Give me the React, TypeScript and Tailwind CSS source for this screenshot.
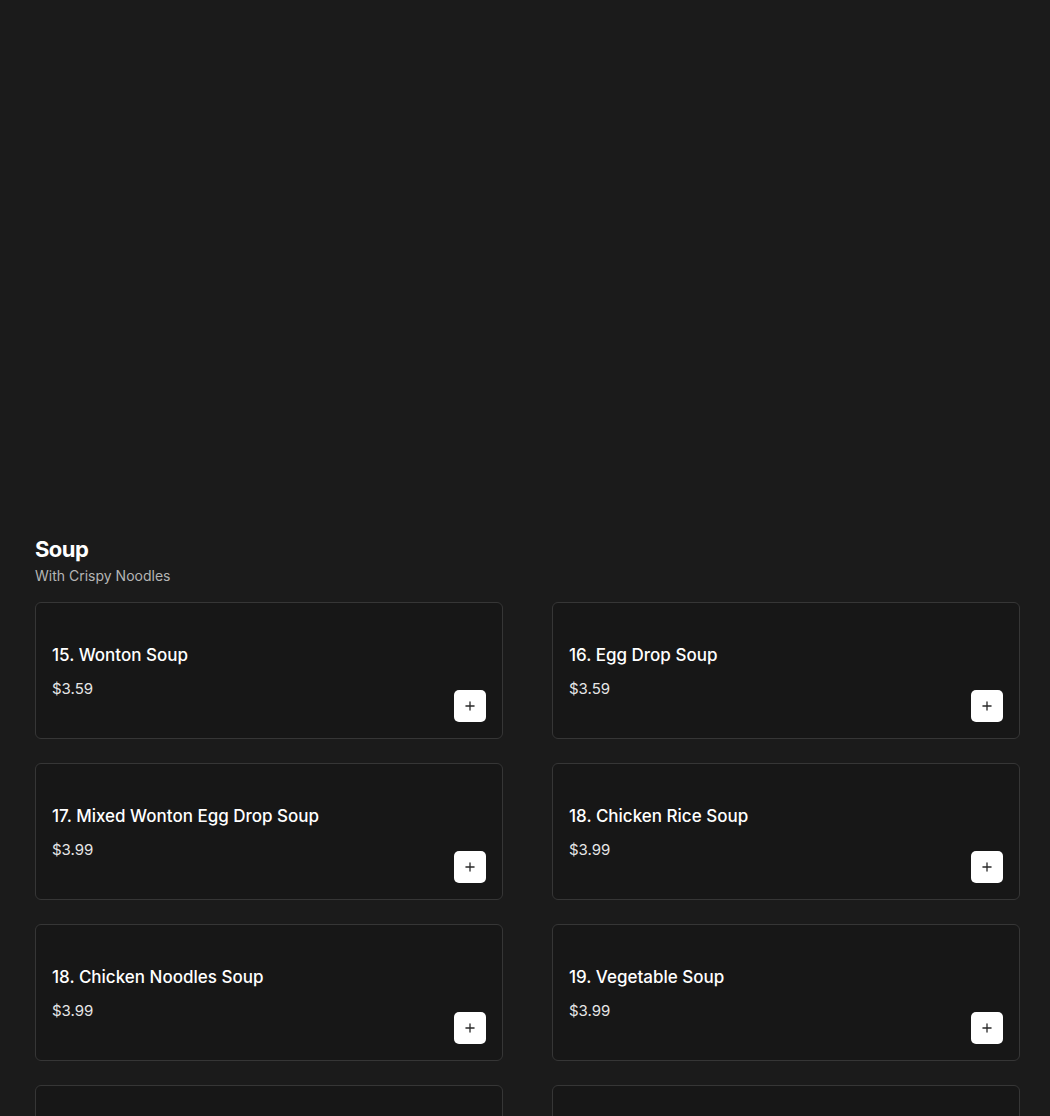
import React from 'react';
import { Plus } from 'lucide-react';

type MenuItem = { name: string; price: string };

const ITEMS: MenuItem[] = [
  { name: '15. Wonton Soup', price: '$3.59' },
  { name: '16. Egg Drop Soup', price: '$3.59' },
  { name: '17. Mixed Wonton Egg Drop Soup', price: '$3.99' },
  { name: '18. Chicken Rice Soup', price: '$3.99' },
  { name: '18. Chicken Noodles Soup', price: '$3.99' },
  { name: '19. Vegetable Soup', price: '$3.99' },
  { name: '20. House Special Soup', price: '$4.99' },
  { name: '21. Hot & Sour Soup', price: '$3.99' },
];

const ItemCard: React.FC<{ item: MenuItem }> = ({ item }) => (
  <div className="h-[137px] rounded-md border border-[#363636] bg-[#171717] px-4 pt-[42px] pb-4 flex flex-col">
    <p className="text-[17px] leading-5 font-medium text-white">{item.name}</p>
    <div className="flex items-end justify-between flex-1">
      <p className="text-[15px] leading-5 text-[#e6e6e6] self-start mt-[14px]">{item.price}</p>
      <button className="w-8 h-8 rounded-[5px] bg-white flex items-center justify-center text-[#2a2a2a]">
        <Plus size={14} strokeWidth={2.25} />
      </button>
    </div>
  </div>
);

const App: React.FC = () => {
  return (
    <div className="h-[1116px] overflow-hidden bg-[#1b1b1b] text-white" style={{ fontFamily: 'Inter, "Noto Sans", sans-serif' }}>
      <div className="h-[537px]" />
      <div className="pl-[35px]">
        <h2 className="text-[22px] leading-6 font-bold tracking-tight text-white">Soup</h2>
        <p className="mt-[5px] text-[14px] leading-5 text-[#b5b5b5]">With Crispy Noodles</p>
        <div className="mt-[16px] grid grid-cols-[468px_468px] gap-x-[49px] gap-y-6">
          {ITEMS.map((item, i) => (
            <ItemCard key={i} item={item} />
          ))}
        </div>
      </div>
    </div>
  );
};

export default App;
